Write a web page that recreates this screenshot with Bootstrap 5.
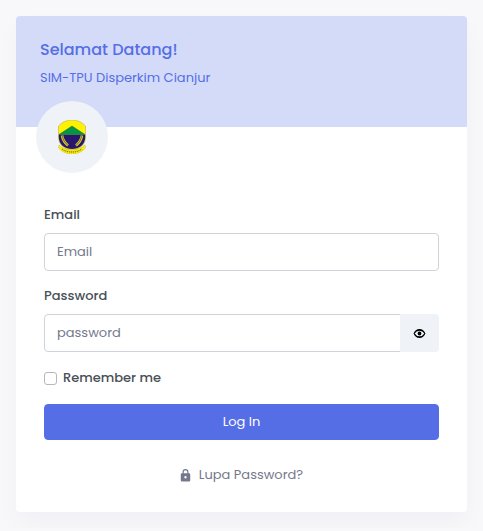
<!DOCTYPE html>
<html lang="id">
<head>
<meta charset="utf-8">
<meta name="viewport" content="width=device-width, initial-scale=1">
<title>Log In</title>
<link href="https://cdn.jsdelivr.net/npm/bootstrap@5.3.0/dist/css/bootstrap.min.css" rel="stylesheet">
<style>
  body { background: #f8f8fb; color: #495057; font: 400 13px/20px Poppins, Inter, "Liberation Sans", sans-serif; }
  .login-card { max-width: 520px; border-radius: 4px; box-shadow: 0 12px 24px rgba(18, 38, 63, .03); }
  .welcome { background: #d4dbf9; color: #556ee6; padding: 24px 24px 39px; }
  .welcome h1 { font-size: 16px; line-height: 19px; font-weight: 500; margin-bottom: 9px; }
  .welcome p { font-size: 13px; line-height: 20px; }
  .login-body { padding: 0 20px 27px; }
  .brand { width: 72px; height: 72px; background: #eff2f7; margin-top: -26px; margin-bottom: 32px; }
  .login-form { padding: 0 8px; }
  .form-label, .form-check-label { font-size: 13px; font-weight: 500; line-height: 20px; }
  .form-label { margin-bottom: 8px; }
  .field { margin-bottom: 15px; }
  .form-control { height: 38px; padding: 8px 12px; font-size: 13px; line-height: 20px; border-color: #ced4da; border-radius: 4px; color: #495057; }
  .form-control::placeholder { color: #74788d; }
  .eye-btn { width: 39px; padding: 0; background: #eff2f7; border: 0; border-radius: 4px; color: #000; }
  .remember { gap: 6px; min-height: 22px; margin-bottom: 15px; }
  .form-check-input.tick { width: 13px; height: 13px; margin: 0; border: 1px solid #b5b8bd; border-radius: 3px; }
  .login-btn { height: 36px; padding: 0; font-size: 13px; line-height: 20px; background: #556ee6; border-color: #556ee6; border-radius: 4px; }
  .forgot { color: #74788d; gap: 8px; margin-top: 25px; }
</style>
</head>
<body>
<main class="container-fluid p-3">
  <div class="login-card card border-0 overflow-hidden mx-auto">
    <header class="welcome">
      <h1>Selamat Datang!</h1>
      <p class="mb-0">SIM-TPU Disperkim Cianjur</p>
    </header>
    <div class="login-body">
      <a href="#" class="brand rounded-circle d-flex align-items-center justify-content-center position-relative" aria-label="Beranda">
        <svg width="28" height="34" viewBox="0 0 28 34" aria-hidden="true">
          <path d="M.5 6Q6 0 14 0T27.500 6V17C27.500 25 21 30 14 30S.5 25 .5 17Z" fill="#fff200" stroke="#a7a25b" stroke-width=".5"/>
          <path d="M.8 14.500H27.200V17C27.200 25 21 29 14 29S.8 25 .8 17Z" fill="#28166f"/>
          <path d="M1 14.500L14 6L27 14.500Z" fill="#079447" stroke="#176f36" stroke-width=".5"/>
          <path d="M4 15.500Q5 21.500 10 25.500M24 15.500Q23 21.500 18 25.500" fill="none" stroke="#d5cc35" stroke-width="2.600"/>
          <path d="M4 15.500Q5 21.500 10 25.500M24 15.500Q23 21.500 18 25.500" fill="none" stroke="#544719" stroke-width=".7"/>
          <path d="M1 25Q6 30 14 30T27 25L27.500 28Q22 34 14 34T.5 28Z" fill="#fff200" stroke="#b9ae2a" stroke-width=".4"/>
          <path d="M4 29Q8 32 14 32T24 29" fill="none" stroke="#8b811b" stroke-width="1.300" stroke-dasharray="1.200 .7"/>
        </svg>
      </a>
      <form class="login-form">
        <div class="field">
          <label class="form-label d-block" for="email">Email</label>
          <input class="form-control" type="email" id="email" placeholder="Email">
        </div>
        <div class="field">
          <label class="form-label d-block" for="password">Password</label>
          <div class="input-group">
            <input class="form-control" type="password" id="password" placeholder="password">
            <button class="btn eye-btn d-flex align-items-center justify-content-center" type="button" aria-label="Tampilkan password">
              <svg width="13" height="13" viewBox="0 0 24 24" fill="currentColor" aria-hidden="true"><path d="M12 8.500a3.500 3.500 0 0 1 0 7 3.500 3.500 0 0 1 0-7m0-5c5 0 9.270 3.600 11 8.500-1.730 4.900-6 8.500-11 8.500S2.730 16.900 1 12c1.730-4.900 6-8.500 11-8.500M3.180 12a9.821 8.800 0 0 0 17.640 0 9.821 8.800 0 0 0-17.640 0"/></svg>
            </button>
          </div>
        </div>
        <div class="remember d-flex align-items-center">
          <input class="form-check-input tick" type="checkbox" id="remember">
          <label class="form-check-label" for="remember">Remember me</label>
        </div>
        <button class="btn btn-primary login-btn w-100" type="submit">Log In</button>
        <div class="d-flex justify-content-center">
          <a href="#" class="forgot d-flex align-items-center text-decoration-none">
            <svg width="11" height="13" viewBox="3 1 18 22" fill="currentColor" aria-hidden="true"><path d="M12 17a2 2 0 0 0 2-2 2 2 0 0 0-2-2 2 2 0 0 0-2 2 2 2 0 0 0 2 2m6-9a2 2 0 0 1 2 2v10a2 2 0 0 1-2 2H6a2 2 0 0 1-2-2V10a2 2 0 0 1 2-2h1V6a5 5 0 0 1 10 0v2h1m-6-5a3 3 0 0 0-3 3v2h6V6a3 3 0 0 0-3-3Z"/></svg>
            Lupa Password?
          </a>
        </div>
      </form>
    </div>
  </div>
</main>
<script src="https://cdn.jsdelivr.net/npm/bootstrap@5.3.0/dist/js/bootstrap.bundle.min.js"></script>
</body>
</html>
